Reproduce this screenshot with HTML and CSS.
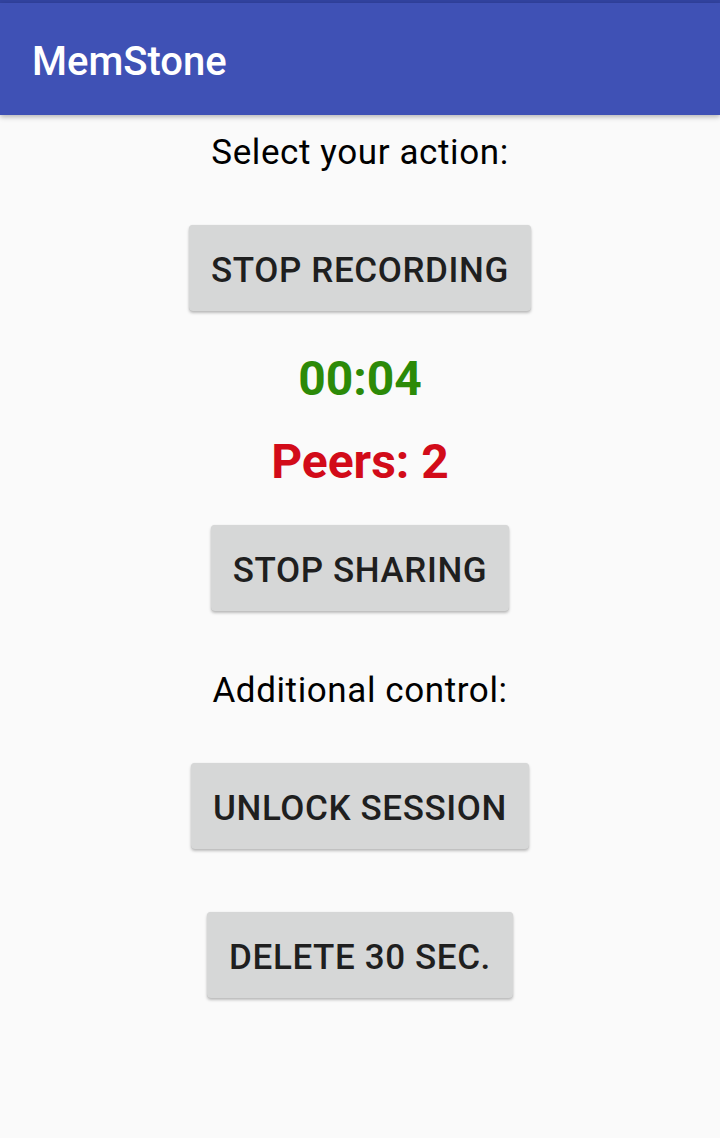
FILE: index.html
```html
<!DOCTYPE html>
<html>
<head>
<meta charset="utf-8">
<link rel="stylesheet" href="styles.css">
</head>
<body>
<div class="status"></div>
<header class="appbar"><span class="title">MemStone</span></header>
<main class="content">
  <div class="label label-first">Select your action:</div>
  <button class="btn btn-rec">STOP RECORDING</button>
  <div class="timer">00:04</div>
  <div class="peers">Peers: 2</div>
  <button class="btn btn-share">STOP SHARING</button>
  <div class="label label-second">Additional control:</div>
  <button class="btn btn-unlock">UNLOCK SESSION</button>
  <button class="btn btn-delete">DELETE 30 SEC.</button>
</main>
</body>
</html>
```
FILE: styles.css
```css
html, body {
  margin: 0;
  padding: 0;
}
body {
  width: 720px;
  height: 1138px;
  background: #fafafa;
  font-family: Roboto, "Noto Sans", sans-serif;
  overflow: hidden;
}
.status {
  height: 3px;
  background: #3243a0;
}
.appbar {
  position: relative;
  z-index: 1;
  height: 112px;
  box-sizing: border-box;
  padding: 39px 0 0 32px;
  background: #3f51b5;
  box-shadow: 0 2px 5px rgba(0, 0, 0, 0.28);
}
.title {
  display: block;
  color: #ffffff;
  font-size: 40px;
  line-height: 40px;
  font-weight: 500;
}
.content {
  display: flex;
  flex-direction: column;
  align-items: center;
}
.label {
  font-size: 35px;
  line-height: 40px;
  letter-spacing: 0.6px;
  color: #000000;
}
.label-first { margin-top: 18px; }
.label-second { margin-top: 60px; }
.btn {
  display: flex;
  align-items: center;
  justify-content: center;
  height: 86px;
  box-sizing: border-box;
  padding: 4px 22px 0;
  border: none;
  border-radius: 4px;
  background: #d6d7d7;
  color: #1f1f1f;
  font-family: Roboto, "Noto Sans", sans-serif;
  font-size: 35px;
  font-weight: 500;
  letter-spacing: 0.6px;
  box-shadow: 0 2px 3px rgba(0, 0, 0, 0.25), 0 0 1px rgba(0, 0, 0, 0.12);
}
.btn-rec { margin-top: 52px; }
.btn-share { margin-top: 35px; }
.btn-unlock { margin-top: 52px; }
.btn-delete { margin-top: 63px; }
.timer, .peers {
  font-size: 48px;
  line-height: 56px;
  font-weight: 700;
}
.timer {
  color: #2c8a08;
  margin-top: 40px;
}
.peers {
  color: #d20b19;
  margin-top: 27px;
}
```
